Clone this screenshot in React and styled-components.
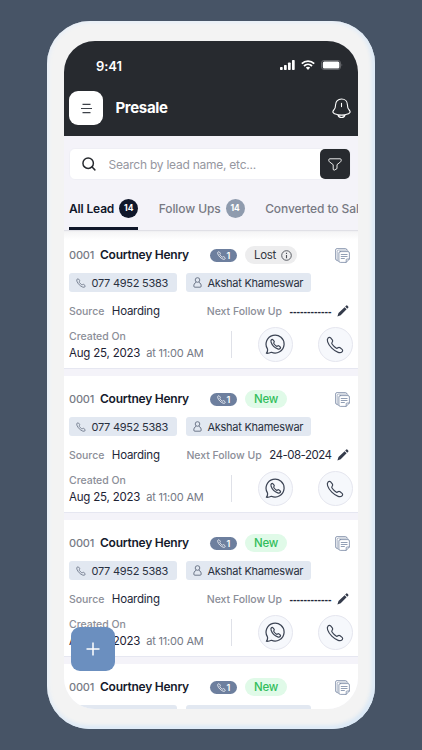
import React, { useState } from 'react';
import styled, { createGlobalStyle } from 'styled-components';

const GlobalStyle = createGlobalStyle`
  * {
    box-sizing: border-box;
  }

  body {
    margin: 0;
    background: #475466;
    font-family: Inter, "Liberation Sans", sans-serif;
    overflow: hidden;
  }

  button, input {
    font-family: inherit;
    margin: 0;
  }

  svg {
    display: block;
    flex-shrink: 0;
  }
`;

const Stage = styled.div`
  height: 750px;
  padding: 21px 0 0 47px;
  background: #475466;
`;

const Phone = styled.div`
  width: 327.5px;
  height: 707.5px;
  padding: 20px 17px 20px;
  border-radius: 43px;
  background: #f3f3f3;
  box-shadow: inset 0 0 5px 1px #e6effa, inset -2px -2px 5px #c9dff3;
`;

const Screen = styled.div`
  position: relative;
  height: 667.5px;
  border-radius: 31px;
  overflow: hidden;
  background: #f4f3f9;
  display: flex;
  flex-direction: column;
`;

const Header = styled.header`
  flex: none;
  height: 95px;
  background: #272a2f;
  color: #fff;
`;

const StatusBar = styled.div`
  display: flex;
  align-items: center;
  justify-content: space-between;
  height: 50px;
  padding: 0 15px 1px 32px;
`;

const Time = styled.span`
  font-size: 13px;
  font-weight: 600;
  letter-spacing: -0.1px;
`;

const StatusIcons = styled.div`
  display: flex;
  align-items: center;
  gap: 6px;
  padding-bottom: 2px;
`;

const NavBar = styled.div`
  display: flex;
  align-items: center;
  height: 34px;
  padding: 0 7px 0 5px;
`;

const MenuButton = styled.button`
  width: 34px;
  height: 34px;
  padding: 0;
  border: none;
  border-radius: 9px;
  background: #fff;
  display: grid;
  place-items: center;
`;

const Title = styled.h1`
  flex: 1;
  margin: 0 0 2px 12.5px;
  font-size: 15px;
  font-weight: 700;
  letter-spacing: -0.35px;
`;

const SearchBar = styled.div`
  flex: none;
  display: flex;
  align-items: center;
  height: 32px;
  margin: 12px 6.5px 0 5px;
  padding: 0 0 0 12px;
  border: 1px solid #efeff5;
  border-radius: 6px;
  background: #fff;
`;

const SearchInput = styled.input`
  flex: 1;
  min-width: 0;
  padding: 0 0 0 12.5px;
  border: none;
  outline: none;
  background: none;
  color: #333;
  font-size: 12px;
  letter-spacing: -0.25px;

  &::placeholder {
    color: #96979f;
    opacity: 1;
  }
`;

const FilterButton = styled.button`
  width: 30px;
  height: 30px;
  padding: 0;
  border: none;
  border-radius: 5px;
  background: #272a2f;
  display: grid;
  place-items: center;
`;

const Tabs = styled.nav`
  flex: none;
  display: flex;
  gap: 20.5px;
  height: 50px;
  padding: 7px 0 0 5px;
  overflow: hidden;
`;

const Tab = styled.button`
  flex: none;
  display: flex;
  align-items: center;
  gap: 5px;
  height: 43px;
  padding: 3px 0 0;
  border: none;
  border-bottom: 3px solid ${({ $active }) => ($active ? '#10172a' : 'transparent')};
  background: none;
  color: ${({ $active }) => ($active ? '#10172a' : '#777983')};
  font-size: 12px;
  font-weight: ${({ $active }) => ($active ? 600 : 500)};
  letter-spacing: ${({ $active }) => ($active ? '-0.15px' : '-0.1px')};
  white-space: nowrap;
`;

const Count = styled.span`
  width: 19px;
  height: 19px;
  border-radius: 50%;
  background: ${({ $active }) => ($active ? '#10172a' : '#8f9bae')};
  color: #fff;
  font-size: 8.5px;
  font-weight: 700;
  letter-spacing: 0;
  line-height: 19px;
  text-align: center;
`;

const List = styled.main`
  flex: 1;
  min-height: 0;
  padding-top: 1px;
  border-top: 1px solid #e0e0e6;
  overflow: hidden;
  background: linear-gradient(#efeff1, #f7f7f9 2px, #f4f3f9 3px);
`;

const Card = styled.article`
  height: 137px;
  margin-bottom: 7px;
  padding: 13px 5px 0 5px;
  border-bottom: 1px solid #e6e7f1;
  background: #fff;

  &:first-child {
    background: linear-gradient(#f5f5f6, #fff 8px);
  }
`;

const CardHead = styled.div`
  display: grid;
  grid-template-columns: 31px 110px 35px 1fr auto;
  align-items: center;
  height: 20px;
  padding-right: 2.5px;
`;

const LeadId = styled.span`
  margin-top: -1px;
  color: #777b85;
  font-size: 11px;
  font-weight: 500;
  letter-spacing: -0.2px;
`;

const Name = styled.strong`
  margin-top: -1px;
  color: #151a2c;
  font-size: 12px;
  font-weight: 600;
  letter-spacing: -0.25px;
  white-space: nowrap;
`;

const CallCount = styled.span`
  display: flex;
  align-items: center;
  justify-content: center;
  gap: 1px;
  width: 27px;
  height: 13px;
  border-radius: 7px;
  background: #6d7f9e;
  color: #fff;
  font-size: 9px;
  font-weight: 600;
`;

const Status = styled.span`
  justify-self: start;
  display: flex;
  align-items: center;
  gap: 5px;
  height: 18px;
  padding: 0 ${({ $lost }) => ($lost ? '5px' : '9px')} 0 9px;
  border-radius: 9px;
  background: ${({ $lost }) => ($lost ? '#ededee' : '#e0fae8')};
  color: ${({ $lost }) => ($lost ? '#33373f' : '#32bd5b')};
  font-size: 11.5px;
  font-weight: ${({ $lost }) => ($lost ? 400 : 500)};
  letter-spacing: -0.3px;
`;

const TagRow = styled.div`
  display: flex;
  gap: 9.5px;
  margin-top: 8px;
`;

const Tag = styled.span`
  display: flex;
  align-items: center;
  gap: 6px;
  width: ${({ $width }) => $width}px;
  height: 19px;
  padding-left: 6.5px;
  border-radius: 3px;
  background: #e2e8f1;
  color: #293040;
  font-size: 11px;
  letter-spacing: -0.27px;
  white-space: nowrap;
`;

const InfoRow = styled.div`
  display: flex;
  align-items: center;
  height: 16px;
  margin-top: 11px;
  padding-right: 3.5px;
`;

const Label = styled.span`
  color: #8b8e98;
  font-size: 10.5px;
  font-weight: 500;
  letter-spacing: -0.03px;
  white-space: nowrap;
`;

const Value = styled.span`
  margin-left: 7.5px;
  color: #232839;
  font-size: 11.5px;
  letter-spacing: -0.25px;
  white-space: nowrap;
`;

const DateValue = styled(Value)`
  letter-spacing: -0.5px;
`;

const EmptyValue = styled(Value)`
  font-family: "Liberation Sans", sans-serif;
  font-size: 10.5px;
  font-weight: 700;
  letter-spacing: 0;
`;

const FollowUp = styled.div`
  display: flex;
  align-items: center;
  margin-left: auto;

  svg {
    margin-left: 5.5px;
  }
`;

const CardFoot = styled.div`
  display: flex;
  align-items: center;
  height: 35px;
  margin-top: 8px;
`;

const Created = styled.div`
  width: 161.5px;
  padding-bottom: 1px;
  line-height: 17px;
`;

const DateLine = styled.div`
  color: #1d2234;
  font-size: 11.5px;
  letter-spacing: -0.2px;
  white-space: nowrap;

  span {
    margin-left: 3px;
    color: #747985;
    font-size: 11px;
  }
`;

const Divider = styled.div`
  width: 1px;
  height: 27px;
  margin-right: 26px;
  background: #dfe1e8;
`;

const RoundButton = styled.button`
  width: 35px;
  height: 35px;
  padding: 0;
  border: 1px solid #e5e6ef;
  border-radius: 50%;
  background: #f6f8fc;
  color: #3c4454;
  display: grid;
  place-items: center;

  & + & {
    margin-left: auto;
  }
`;

const AddButton = styled.button`
  position: absolute;
  left: 7px;
  bottom: 38px;
  width: 44px;
  height: 44px;
  padding: 0;
  border: none;
  border-radius: 9px;
  background: #6b8fbf;
  display: grid;
  place-items: center;
`;

const HANDSET =
  'M6.2 2.6 C5.2 1.5 3.8 1.7 2.9 2.6 C1.6 3.9 1.4 5.6 2.2 7.8 C4.2 13.7 10.3 19.8 16.2 21.8 C18.4 22.6 20.1 22.4 21.4 21.1 C22.3 20.2 22.5 18.8 21.4 17.8 L18.8 15.6 C17.8 14.8 16.8 14.9 15.9 15.7 C14.8 16.7 14.2 16.7 13 15.8 C11.2 14.5 9.5 12.8 8.2 11 C7.3 9.8 7.3 9.2 8.3 8.1 C9.1 7.2 9.2 6.2 8.4 5.2 Z';

const PhoneIcon = ({ size, stroke = 1.6, color = 'currentColor' }) => (
  <svg width={size} height={size} viewBox="0 0 24 24" fill="none" stroke={color} strokeWidth={stroke} strokeLinejoin="round">
    <path d={HANDSET} />
  </svg>
);

const WhatsappIcon = () => (
  <svg width="21" height="21" viewBox="0 0 24 24" fill="none" stroke="currentColor" strokeWidth="1.4" strokeLinejoin="round">
    <path d="M1.6 22 Q3.4 20 2.8 17 A10.3 10.3 0 1 1 7.3 20.9 Q4.6 22.2 1.6 22 Z" />
    <path d={HANDSET} transform="translate(5.8 5.2) scale(.54)" strokeWidth="2.5" />
  </svg>
);

const NotesIcon = () => (
  <svg width="15" height="15" viewBox="0 0 15 15" fill="none" stroke="#7686a2" strokeWidth=".8" strokeLinejoin="round" strokeLinecap="round">
    <path d="M2 12.4 A1.4 1.4 0 0 1 .6 11 V2 A1.4 1.4 0 0 1 2 .6 H10.5 A1.4 1.4 0 0 1 11.9 1.6" />
    <path d="M3.3 13.4 A1.3 1.3 0 0 1 2.2 12 V3.4 A1.3 1.3 0 0 1 3.5 2.1 H12 A1.2 1.2 0 0 1 13.1 2.9" strokeWidth=".6" />
    <path d="M5.3 3.6 H13 A1.4 1.4 0 0 1 14.4 5 V11 L11.2 14.4 H5.3 A1.4 1.4 0 0 1 3.9 13 V5 A1.4 1.4 0 0 1 5.3 3.6 Z M11.2 14.2 V11.8 A.8 .8 0 0 1 12 11 H14.2 M6.2 6.5 H12.1 M6.2 8.5 H12.1 M6.2 10.5 H9.4" />
  </svg>
);

const PersonIcon = () => (
  <svg width="9" height="11" viewBox="0 0 9 11" fill="none" stroke="#626c7f" strokeWidth=".9">
    <circle cx="4.5" cy="3" r="2.3" />
    <path d="M3.2 5.2 C1.2 6.2 .8 7.7 .8 9.1 Q.8 10.2 1.9 10.2 H7.1 Q8.2 10.2 8.2 9.1 C8.2 7.7 7.8 6.2 5.8 5.2" />
  </svg>
);

const PencilIcon = () => (
  <svg width="12" height="12" viewBox="0 0 12 12" fill="#343b4b">
    <path d="M1.5 7.9 L7.6 2.2 L9.6 4.3 L3.7 10.2 L.4 11.5 Z M8.2 1.6 L9.3 .6 Q9.9 .1 10.5 .7 L11.2 1.4 Q11.8 2.1 11.2 2.7 L10.2 3.7 Z" />
  </svg>
);

const InfoIcon = () => (
  <svg width="11" height="11" viewBox="0 0 11 11" fill="none" stroke="#4b4e56" strokeWidth=".9">
    <circle cx="5.5" cy="5.5" r="4.8" />
    <path d="M5.5 5 V8.2 M5.5 2.8 V3.9" strokeWidth="1.1" />
  </svg>
);

const BellIcon = () => (
  <svg width="19" height="21" viewBox="0 0 19 21" fill="none" stroke="#fff" strokeWidth="1.1" strokeLinecap="round" strokeLinejoin="round">
    <path d="M9.5 1 C6 1 3.6 3.5 3.6 6.8 C3.6 9.8 3.2 10.6 1.8 12 C.2 13.7 .7 15 2.5 15.7 C6.5 17.3 12.5 17.3 16.5 15.7 C18.3 15 18.8 13.7 17.2 12 C15.8 10.6 15.4 9.8 15.4 6.8 C15.4 3.5 13 1 9.5 1 Z M9.5 5.3 V8.6 M5.9 17 C7 20.3 12 20.3 13.1 17" />
  </svg>
);

const FilterIcon = () => (
  <svg width="14" height="13" viewBox="0 0 14 13" fill="none" stroke="#fff" strokeWidth=".9" strokeLinejoin="round">
    <path d="M1.8 .8 H12.2 Q13.2 .8 13.2 1.8 V2.7 Q13.2 3.3 12.7 3.7 L9 6.7 V10.6 L6.2 12.2 Q5.2 12.2 5.2 11 V6.7 L1.3 3.7 Q.8 3.3 .8 2.7 V1.8 Q.8 .8 1.8 .8 Z" />
  </svg>
);

const leads = [
  { status: 'Lost', followUp: null },
  { status: 'New', followUp: '24-08-2024' },
  { status: 'New', followUp: null },
  { status: 'New', followUp: null },
];

const tabs = [
  { label: 'All Lead', count: 14 },
  { label: 'Follow Ups', count: 14 },
  { label: 'Converted to Sales' },
];

const LeadCard = ({ lead }) => {
  const lost = lead.status === 'Lost';

  return (
    <Card>
      <CardHead>
        <LeadId>0001</LeadId>
        <Name>Courtney Henry</Name>
        <CallCount>
          <PhoneIcon size={9} stroke={2} />1
        </CallCount>
        <Status $lost={lost}>
          {lead.status}
          {lost && <InfoIcon />}
        </Status>
        <NotesIcon />
      </CardHead>

      <TagRow>
        <Tag $width={107.5}>
          <PhoneIcon size={10} stroke={1.9} color="#626c7f" />
          077 4952 5383
        </Tag>
        <Tag $width={125}>
          <PersonIcon />
          Akshat Khameswar
        </Tag>
      </TagRow>

      <InfoRow>
        <Label>Source</Label>
        <Value>Hoarding</Value>
        <FollowUp>
          <Label>Next Follow Up</Label>
          {lead.followUp ? (
            <DateValue>{lead.followUp}</DateValue>
          ) : (
            <EmptyValue>------------</EmptyValue>
          )}
          <PencilIcon />
        </FollowUp>
      </InfoRow>

      <CardFoot>
        <Created>
          <Label>Created On</Label>
          <DateLine>
            Aug 25, 2023 <span>at 11:00 AM</span>
          </DateLine>
        </Created>
        <Divider />
        <RoundButton aria-label="WhatsApp">
          <WhatsappIcon />
        </RoundButton>
        <RoundButton aria-label="Call">
          <PhoneIcon size={18} stroke={1.6} />
        </RoundButton>
      </CardFoot>
    </Card>
  );
};

const App = () => {
  const [activeTab, setActiveTab] = useState(0);
  const [search, setSearch] = useState('');

  return (
    <>
      <GlobalStyle />
      <Stage>
        <Phone>
          <Screen>
            <Header>
              <StatusBar>
                <Time>9:41</Time>
                <StatusIcons>
                  <svg width="15" height="10" viewBox="0 0 15 10" fill="#fff">
                    <rect x="0" y="7" width="2.7" height="3" rx=".7" />
                    <rect x="4" y="5" width="2.7" height="5" rx=".7" />
                    <rect x="8" y="2.5" width="2.7" height="7.5" rx=".7" />
                    <rect x="12" y="0" width="2.7" height="10" rx=".7" />
                  </svg>
                  <svg width="14" height="10" viewBox="0 0 14 10" fill="none" stroke="#fff" strokeWidth="1.8">
                    <path d="M.8 3.6 C4.3 .2 9.7 .2 13.2 3.6 M3 6 C5.3 3.8 8.7 3.8 11 6" />
                    <path d="M4.8 7.6 Q7 5.9 9.2 7.6 L7 9.9 Z" fill="#fff" stroke="none" />
                  </svg>
                  <svg width="22" height="10" viewBox="0 0 22 10">
                    <rect x=".5" y=".5" width="19" height="9" rx="2.5" fill="none" stroke="#606266" />
                    <rect x="1.8" y="1.5" width="16.6" height="7" rx="1.5" fill="#fff" />
                    <path d="M20.6 3.5 Q22 5 20.6 6.5 Z" fill="#77797d" />
                  </svg>
                </StatusIcons>
              </StatusBar>
              <NavBar>
                <MenuButton aria-label="Menu">
                  <svg width="11" height="11" viewBox="0 0 11 11" stroke="#3e424a" strokeWidth="1.2">
                    <path d="M1.5 1.3 H9.5 M0 5.5 H11 M1.5 9.7 H9.5" />
                  </svg>
                </MenuButton>
                <Title>Presale</Title>
                <BellIcon />
              </NavBar>
            </Header>

            <SearchBar>
              <svg width="14" height="14" viewBox="0 0 15 15" fill="none" stroke="#272a2f" strokeWidth="1.6" strokeLinecap="round">
                <circle cx="6.6" cy="6.6" r="5.6" />
                <path d="M10.8 10.8 L13.8 13.8" />
              </svg>
              <SearchInput
                value={search}
                onChange={(e) => setSearch(e.target.value)}
                placeholder="Search by lead name, etc..."
              />
              <FilterButton aria-label="Filter">
                <FilterIcon />
              </FilterButton>
            </SearchBar>

            <Tabs>
              {tabs.map((tab, i) => (
                <Tab key={tab.label} $active={i === activeTab} onClick={() => setActiveTab(i)}>
                  {tab.label}
                  {tab.count && <Count $active={i === activeTab}>{tab.count}</Count>}
                </Tab>
              ))}
            </Tabs>

            <List>
              {leads.map((lead, i) => (
                <LeadCard key={i} lead={lead} />
              ))}
            </List>

            <AddButton aria-label="Add lead">
              <svg width="14" height="14" viewBox="0 0 14 14" stroke="#fff" strokeWidth="1.5">
                <path d="M7 .5 V13.5 M.5 7 H13.5" />
              </svg>
            </AddButton>
          </Screen>
        </Phone>
      </Stage>
    </>
  );
};

export default App;
